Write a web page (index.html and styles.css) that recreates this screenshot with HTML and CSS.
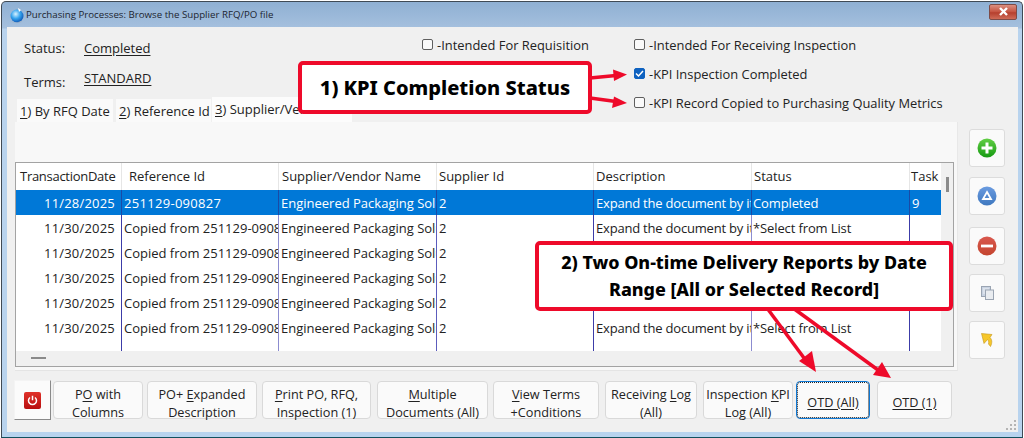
FILE: index.html
```html
<!DOCTYPE html>
<html lang="en">
<head>
<meta charset="utf-8">
<title>Purchasing Processes</title>
<link rel="stylesheet" href="styles.css">
</head>
<body>
<div class="window">
  <header class="titlebar">
    <svg class="app-icon" width="16" height="16" viewBox="0 0 16 16"><defs><radialGradient id="g" cx="40%" cy="35%" r="70%"><stop offset="0" stop-color="#d8f2ff"/><stop offset=".5" stop-color="#35a4ee"/><stop offset="1" stop-color="#0a4fb0"/></radialGradient></defs><circle cx="8" cy="9" r="6.5" fill="url(#g)"/><path d="M2 14c3 1.5 9 1.5 12-1l-2 2.500H4z" fill="#9fb4c8"/><path d="M9 1l3 2-2 2z" fill="#fff"/></svg>
    <span class="title-text">Purchasing Processes: Browse the Supplier RFQ/PO file</span>
    <button class="close" aria-label="Close"><svg width="11" height="9" viewBox="0 0 11 9"><path d="M2 1l7 7M9 1L2 8" stroke="#fff" stroke-width="2.400"/></svg></button>
  </header>
  <main class="client">
    <section class="top">
      <div class="fields">
        <div class="field field-status"><span class="field-label">Status:</span><span class="field-value">Completed</span></div>
        <div class="field field-terms"><span class="field-label">Terms:</span><span class="field-value">STANDARD</span></div>
      </div>
      <div class="checks">
        <label class="check"><span class="box"></span>-Intended For Requisition</label>
        <label class="check"><span class="box"></span>-Intended For Receiving Inspection</label>
        <span></span>
        <label class="check"><span class="box box-on"><svg width="9" height="9" viewBox="0 0 9 9"><path d="M1 4.500l2.500 2.500L8 2" fill="none" stroke="#fff" stroke-width="1.500"/></svg></span>-KPI Inspection Completed</label>
        <span></span>
        <label class="check"><span class="box"></span>-KPI Record Copied to Purchasing Quality Metrics</label>
      </div>
    </section>
    <section class="workspace">
      <div class="tabbed">
        <div class="tabs">
          <div class="tab tab-1"><u>1</u>) By RFQ Date</div>
          <div class="tab tab-2"><u>2</u>) Reference Id</div>
          <div class="tab tab-3 tab-active"><u>3</u>) Supplier/Vendor</div>
        </div>
        <div class="panel">
          <div class="grid">
            <div class="grid-main">
              <table class="table">
                <colgroup><col class="c1"><col class="c2"><col class="c3"><col class="c4"><col class="c5"><col class="c6"><col class="c7"></colgroup>
                <thead><tr><th class="th-date">TransactionDate</th><th class="th-ref">Reference Id</th><th>Supplier/Vendor Name</th><th class="th-tight">Supplier Id</th><th class="th-tight">Description</th><th class="th-tight">Status</th><th class="th-task">Task</th></tr></thead>
                <tbody>
                  <tr class="selected"><td class="date">11/28/2025</td><td class="refnum">251129-090827</td><td>Engineered Packaging Solutions</td><td>2</td><td class="desc">Expand the document by item</td><td class="stat">Completed</td><td>9</td></tr>
                  <tr><td class="date">11/30/2025</td><td>Copied from 251129-090827</td><td>Engineered Packaging Solutions</td><td>2</td><td class="desc">Expand the document by item</td><td class="stat">*Select from List</td><td></td></tr>
                  <tr><td class="date">11/30/2025</td><td>Copied from 251129-090827</td><td>Engineered Packaging Solutions</td><td>2</td><td class="desc">Expand the document by item</td><td class="stat">*Select from List</td><td></td></tr>
                  <tr><td class="date">11/30/2025</td><td>Copied from 251129-090827</td><td>Engineered Packaging Solutions</td><td>2</td><td class="desc">Expand the document by item</td><td class="stat">*Select from List</td><td></td></tr>
                  <tr><td class="date">11/30/2025</td><td>Copied from 251129-090827</td><td>Engineered Packaging Solutions</td><td>2</td><td class="desc">Expand the document by item</td><td class="stat">*Select from List</td><td></td></tr>
                  <tr><td class="date">11/30/2025</td><td>Copied from 251129-090827</td><td>Engineered Packaging Solutions</td><td>2</td><td class="desc">Expand the document by item</td><td class="stat">*Select from List</td><td></td></tr>
                  <tr class="filler"><td></td><td></td><td></td><td></td><td></td><td></td><td></td></tr>
                </tbody>
              </table>
              <div class="vscroll"><span class="vthumb"></span></div>
            </div>
            <div class="hscroll"><span class="hthumb"></span></div>
          </div>
        </div>
      </div>
      <aside class="side">
        <button class="side-btn"><svg width="20" height="20" viewBox="0 0 20 20"><defs><linearGradient id="gg" x1="0" y1="0" x2="0" y2="1"><stop offset="0" stop-color="#62cf45"/><stop offset="1" stop-color="#169a12"/></linearGradient></defs><circle cx="10" cy="10" r="9.500" fill="url(#gg)"/><path d="M10 4.500v11M4.500 10h11" stroke="#fff" stroke-width="3"/></svg></button>
        <button class="side-btn"><svg width="20" height="20" viewBox="0 0 20 20"><defs><linearGradient id="bg" x1="0" y1="0" x2="0" y2="1"><stop offset="0" stop-color="#6a9be0"/><stop offset="1" stop-color="#3f78bf"/></linearGradient></defs><circle cx="10" cy="10" r="9.500" fill="url(#bg)"/><path d="M10 6l4 7H6z" fill="none" stroke="#fff" stroke-width="1.800"/></svg></button>
        <button class="side-btn side-gap"><svg width="20" height="20" viewBox="0 0 20 20"><defs><linearGradient id="rg" x1="0" y1="0" x2="0" y2="1"><stop offset="0" stop-color="#d9584e"/><stop offset="1" stop-color="#c4452f"/></linearGradient></defs><circle cx="10" cy="10" r="9.500" fill="url(#rg)"/><path d="M4 10h12" stroke="#fff" stroke-width="2.800"/></svg></button>
        <button class="side-btn"><svg width="13" height="14" viewBox="0 0 13 14"><rect x=".5" y=".5" width="9" height="10" fill="#c9d3e2" stroke="#9aa4b2"/><path d="M2 3h6M2 5h6M2 7h6" stroke="#eef1f5"/><rect x="4.500" y="4" width="8" height="9.500" fill="#e9ecf0" stroke="#9aa4b2"/></svg></button>
        <button class="side-btn"><svg width="12" height="14" viewBox="0 0 12 14"><path d="M0.500 0.500L11 1.500 9 4.500C11 6.500 11.500 9.500 9.500 13.500L7.500 11C8 9 7.500 7.500 6.500 6.500L3 10.500z" fill="#f6c72a" stroke="#c4951a" stroke-width=".6"/></svg></button>
      </aside>
    </section>
    <footer class="footer">
      <button class="power" aria-label="Exit"><span class="power-face"><svg width="11" height="11" viewBox="0 0 11 11"><path d="M3 2.500a4 4 0 1 0 5 0M5.500 .8v4.500" fill="none" stroke="#fff" stroke-width="1.500"/></svg></span></button>
      <button class="btn b1">P<u>O</u> with<br>Columns</button>
      <button class="btn b2">PO+ <u>E</u>xpanded<br>Description</button>
      <button class="btn b3"><u>P</u>rint PO, RFQ,<br>Inspection (1)</button>
      <button class="btn b4"><u>M</u>ultiple<br>Documents (All)</button>
      <button class="btn b5"><u>V</u>iew Terms<br>+Conditions</button>
      <button class="btn b6">Receiving <u>L</u>og<br>(All)</button>
      <button class="btn b7">Inspection <u>K</u>PI<br>Log (All)</button>
      <button class="btn b8 btn-focus"><u>OTD (All)</u></button>
      <button class="btn b9"><u>OTD (1)</u></button>
    </footer>
    <svg class="grip" width="10" height="10" viewBox="0 0 10 10"><path d="M8 0h2v2H8zM4 4h2v2H4zM8 4h2v2H8zM0 8h2v2H0zM4 8h2v2H4zM8 8h2v2H8z" fill="#b4b4b4"/></svg>
  </main>

  <svg class="arrows" width="1024" height="438" viewBox="0 0 1024 438">
    <g fill="none" stroke="#ee0a2a" stroke-width="3.500">
      <path d="M590 78L616 75.500"/>
      <path d="M590 98L616 101.500"/>
      <path d="M767 308L807 362"/>
      <path d="M793 308L878 370"/>
    </g>
    <g fill="#ee0a2a">
      <path d="M627 74.500L613 69.500L614 81z"/>
      <path d="M627 103L614 96.500L612 108z"/>
      <path d="M816 372L799 361L812 351z"/>
      <path d="M891 378L873 375L882 362z"/>
    </g>
  </svg>
  <div class="callout callout-1">1) KPI Completion Status</div>
  <div class="callout callout-2">2) Two On-time Delivery Reports by Date<br>Range [All or Selected Record]</div>
</div>
</body>
</html>
```
FILE: styles.css
```css
* { box-sizing: border-box; }
html, body { margin: 0; padding: 0; background: #fff; }
body { width: 1024px; height: 438px; overflow: hidden; padding: 1px 1px 0; font-family: "Open Sans", "Noto Sans", sans-serif; font-size: 13px; color: #222; }
button { font: inherit; color: inherit; }
u { text-underline-offset: 2px; }

.window { position: relative; width: 1022px; height: 437px; display: flex; flex-direction: column; border: 1px solid #3f4a55; border-bottom-color: #12505e; border-radius: 5px 5px 0 0; background: linear-gradient(#8fb0d3 0, #a5c0de 26px, #b8d3ee 27px, #b8d3ee 100%); }

.titlebar { flex: none; height: 25px; display: flex; align-items: center; padding: 0 5px 0 7px; }
.app-icon { flex: none; margin-right: 1px; }
.title-text { font-size: 9.700px; color: #1c2530; }
.close { width: 28px; height: 16px; margin: -6px 0 0 auto; padding: 0; display: flex; align-items: center; justify-content: center; border: 1px solid #7d4b47; border-radius: 2px; background: linear-gradient(#dc8f80, #c4523f 50%, #b53f2e 55%, #cf6b57); }

.client { position: relative; flex: 1; margin: 0 4px 5px 5px; background: #f0f0f0; display: flex; flex-direction: column; }

.top { flex: none; height: 70px; display: flex; }
.fields { width: 415px; padding: 9px 0 0 17px; }
.field { display: flex; height: 24px; align-items: center; }
.field-terms { margin-top: 6px; }
.field-label { width: 60px; }
.field-terms .field-label { transform: translateY(4px); }
.field-value { text-decoration: underline; text-underline-offset: 2px; }
.checks { display: grid; grid-template-columns: 212px auto; grid-auto-rows: 29px; padding-top: 3px; align-content: start; font-size: 12.900px; }
.check { display: flex; align-items: center; white-space: nowrap; }
.box { width: 11px; height: 11px; margin-right: 4px; display: inline-flex; align-items: center; justify-content: center; background: #fafafa; border: 1px solid #5f5f5f; border-radius: 2px; }
.box-on { background: #0f62c0; border-color: #0f62c0; }

.workspace { flex: none; display: flex; padding-left: 8px; }
.tabbed { width: 943px; }
.tabs { height: 25px; display: flex; align-items: flex-end; padding-left: 2px; }
.tab { height: 23px; padding: 3px 0 0 3px; background: #fafafa; white-space: nowrap; overflow: hidden; }
.tab-1 { width: 96px; }
.tab-2 { width: 95px; margin-left: 3px; }
.tab-3 { width: 140px; height: 25px; margin-left: 1px; background: #fcfcfc; padding-top: 3px; }
.panel { height: 249px; background: #f8f8f8; padding: 40px 3px 0 0; border-bottom: 1px solid #e4e4e4; border-right: 1px solid #e8e8e8; }
.grid { height: 205px; border: 1px solid #a3a3a3; border-bottom-width: 2px; background: #fff; }
.grid-main { display: flex; height: 188px; }
.table { width: 925px; height: 188px; table-layout: fixed; border-collapse: separate; border-spacing: 0; background: #fff; }
.c1 { width: 106px; } .c2 { width: 157px; } .c3 { width: 158px; } .c4 { width: 157px; } .c5 { width: 158px; } .c6 { width: 158px; } .c7 { width: 31px; }
.table th { height: 27px; padding: 0 0 1px 3px; font-weight: 400; text-align: left; white-space: nowrap; overflow: hidden; border-right: 1px solid #e6e6e6; }
.table th.th-date { letter-spacing: -.28px; padding-left: 4px; }
.table th.th-ref { padding-left: 7px; }
.table th.th-tight { padding-left: 2px; }
.table th.th-task { padding-left: 1px; }
.table td { height: 25px; padding: 1px 0 0 2px; white-space: nowrap; overflow: hidden; border-right: 1px solid #3c3ca8; }
.table td:nth-child(3n+2) { border-right-color: #8c8cd0; }
.table td:nth-child(3) { border-right-color: #5c5cbc; }
.table td:last-child, .table th:last-child { border-right: 0; }
.table td.date { text-align: right; padding: 1px 6px 0 0; letter-spacing: .2px; }
.table td.refnum { letter-spacing: .3px; }
.table td.desc { letter-spacing: -.2px; padding-left: 2px; }
.table td.stat { letter-spacing: -.12px; padding-left: 1px; }
.selected td { background: #0078d7; color: #fff; }
.selected td:nth-child(n) { border-right-color: #1a4aa6; }
.filler td { height: 11px; }
.vscroll { flex: 1; background: #f0f0f0; position: relative; }
.vthumb { position: absolute; left: 5px; top: 14px; width: 3px; height: 15px; background: #8a8a8a; }
.hscroll { position: relative; height: 15px; background: #f0f0f0; }
.hthumb { position: absolute; left: 15px; top: 6px; width: 15px; height: 2px; background: #8a8a8a; }

.side { flex: none; margin: 32px 0 0 11px; display: flex; flex-direction: column; gap: 9px; }
.side-btn { width: 36px; height: 38px; padding: 0; display: flex; align-items: center; justify-content: center; background: #fafafa; border: 1px solid #dcdcdc; border-radius: 3px; }
.side-btn:nth-child(2) { margin-top: 1px; }
.side-gap { margin-top: 3px; }

.footer { flex: none; display: flex; margin-top: 10px; padding-left: 7px; align-items: flex-start; }
.power { width: 37px; height: 40px; margin-top: -1px; padding: 0; display: flex; align-items: center; justify-content: center; background: #fbfbfb; border: 1px solid; border-color: #f4f4f4 #8a8a8a #8a8a8a #f4f4f4; }
.power-face { width: 17px; height: 17px; display: flex; align-items: center; justify-content: center; background: linear-gradient(#e0322a, #b80f0f); border-radius: 2px; }
.btn { height: 38px; padding: 3px 0 0; font-size: 12.700px; line-height: 18px; text-align: center; white-space: nowrap; background: #fafafa; border: 1px solid #d9d9d9; border-radius: 4px; }
.b1 { width: 90px; margin-left: 2px; }
.b2 { width: 110px; margin-left: 4px; }
.b3 { width: 109px; margin-left: 5px; }
.b4 { width: 111px; margin-left: 6px; }
.b5 { width: 106px; margin-left: 5px; }
.b6 { width: 92px; margin-left: 6px; }
.b7 { width: 90px; margin-left: 6px; }
.b8 { width: 74px; margin-left: 3px; }
.b9 { width: 75px; margin-left: 7px; }
.btn-focus { border-color: #0f78d4; outline: 1px dotted #222; outline-offset: -2px; }
.grip { position: absolute; right: 2px; bottom: 2px; }

.arrows { position: absolute; left: -2px; top: -2px; pointer-events: none; }
.callout { position: absolute; display: flex; align-items: center; justify-content: center; text-align: center; background: #fff; color: #000; border: 4px solid #ee0a2a; border-radius: 5px; font-family: "Noto Sans", sans-serif; font-weight: 800; }
.callout-1 { left: 296px; top: 59px; width: 294px; height: 53px; font-size: 20px; }
.callout-2 { left: 533px; top: 239px; width: 418px; height: 70px; font-size: 17.900px; line-height: 27px; }
```
